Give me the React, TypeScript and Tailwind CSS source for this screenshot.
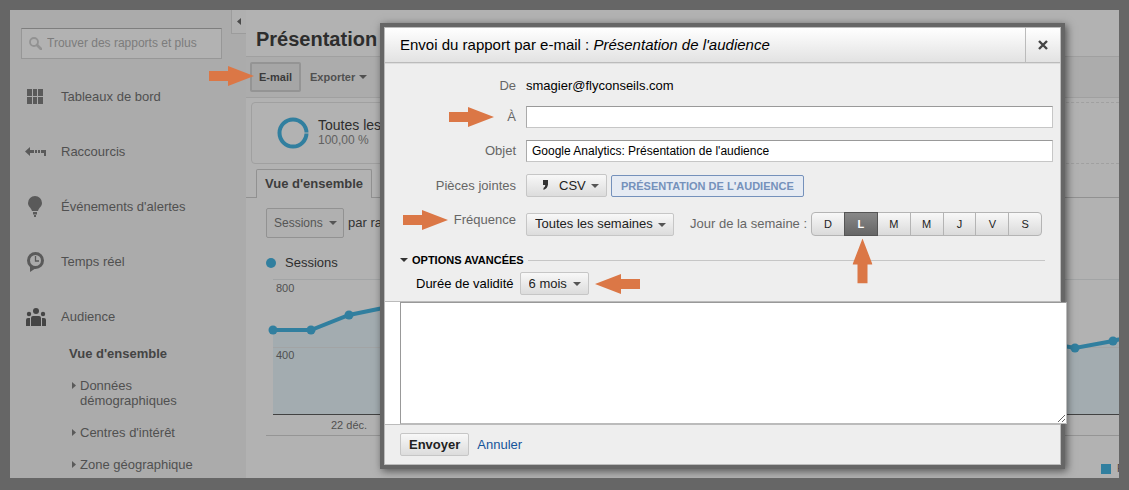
import type { ReactNode } from "react";
import clsx from "clsx";

const DAYS = ["D", "L", "M", "M", "J", "V", "S"];

const STEP = 38.17;
const SESSIONS = [
  51, 51, 36, 28, 24, 30, 44, 52, 50, 38, 30, 26, 34, 48, 54, 50, 40, 32, 30, 46, 62, 69, 62, 52,
];

function Caret({ className }: { className?: string }) {
  return (
    <svg className={clsx("h-1 w-2", className)} viewBox="0 0 8 4" aria-hidden>
      <path d="M0 0h8L4 4z" fill="currentColor" />
    </svg>
  );
}

function Arrow({ className }: { className?: string }) {
  return (
    <svg className={clsx("h-5 w-[45px] shrink-0 text-[#db7746]", className)} viewBox="0 0 45 20" aria-hidden>
      <path d="M0 5h19V0l26 10-26 10v-5H0z" fill="currentColor" />
    </svg>
  );
}

function Dropdown({ label, value, icon }: { label: string; value: string; icon?: ReactNode }) {
  return (
    <div className="relative">
      <select
        aria-label={label}
        className={clsx(
          "block h-[23px] appearance-none rounded-xs border border-[#c6c6c6] bg-linear-to-b from-[#f8f8f8] to-[#dcdcdc] pr-5 text-[13px] text-[#222]",
          icon ? "pl-8" : "pl-2",
        )}
      >
        <option>{value}</option>
      </select>
      {icon}
      <Caret className="pointer-events-none absolute right-2 top-[10px] text-[#555]" />
    </div>
  );
}

function NavItem({ icon, label }: { icon: ReactNode; label: string }) {
  return (
    <a href="#" className="flex h-[55px] items-center pl-1">
      <span className="w-9">{icon}</span>
      {label}
    </a>
  );
}

function SubItem({ children }: { children: ReactNode }) {
  return (
    <a href="#" className="flex gap-1">
      <svg className="mt-1 h-[7px] w-1 shrink-0" viewBox="0 0 4 7" aria-hidden>
        <path d="M0 0v7l4-3.500z" fill="#5a5a5a" />
      </svg>
      <span>{children}</span>
    </a>
  );
}

function Sidebar() {
  return (
    <aside className="relative w-[236px] shrink-0 bg-[#ababab] pl-[11px] pr-6 pt-[18px] text-[13px] leading-[15px] text-[#505050]">
      <button
        type="button"
        aria-label="Réduire le menu"
        className="absolute right-0 top-0 flex h-6 w-[15px] items-center justify-center border-b border-l border-[#9c9c9c] bg-[#b0b0b0]"
      >
        <svg className="h-[7px] w-1" viewBox="0 0 4 7" aria-hidden>
          <path d="M4 0v7L0 3.500z" fill="#4a4a4a" />
        </svg>
      </button>

      <label className="flex h-[31px] items-center gap-[5px] border border-[#979797] border-t-[#7e7e7e] bg-[#b2b2b2] pl-[7px]">
        <svg className="h-[13px] w-[13px] shrink-0" viewBox="0 0 13 13" fill="none" stroke="#929292" aria-hidden>
          <circle cx="5" cy="5" r="4" strokeWidth="1.800" />
          <path d="M8 8l4 4" strokeWidth="2.600" strokeLinecap="round" />
        </svg>
        <input
          type="text"
          aria-label="Rechercher"
          placeholder="Trouver des rapports et plus"
          className="w-full min-w-0 bg-transparent text-[12px] outline-none placeholder:text-[#7c7c7c]"
        />
      </label>

      <nav className="mt-[10px]">
        <NavItem
          label="Tableaux de bord"
          icon={
            <svg className="ml-[2px] h-[15px] w-4" viewBox="0 0 16 15" fill="#5a5a5a" aria-hidden>
              <path d="M0 0h5v7H0zM6 0h4v7H6zM11 0h5v7h-5zM0 8h5v7H0zM6 8h4v7H6zM11 8h5v7h-5z" />
            </svg>
          }
        />
        <NavItem
          label="Raccourcis"
          icon={
            <svg className="h-[9px] w-[21px]" viewBox="0 0 21 9" fill="#5a5a5a" aria-hidden>
              <path d="M0 4.500L5 0v3h4v3H5v3zM10 3h2v3h-2zM13 3h2v3h-2zM16 3h5v6h-2V6h-3z" />
            </svg>
          }
        />
        <NavItem
          label="Événements d'alertes"
          icon={
            <svg className="ml-[3px] h-[21px] w-[14px]" viewBox="0 0 14 21" fill="#5a5a5a" aria-hidden>
              <path d="M7 0a7 7 0 0 1 7 7c0 3.500-3 4.500-4 8H4c-1-3.500-4-4.500-4-8a7 7 0 0 1 7-7zM5 16h4v1.500H5zM5 17.500h4v1H5zM6 19h2v2H6z" />
            </svg>
          }
        />
        <NavItem
          label="Temps réel"
          icon={
            <svg className="ml-[2px] h-5 w-[17px]" viewBox="0 0 17 20" fill="none" stroke="#5a5a5a" aria-hidden>
              <circle cx="8.500" cy="8.500" r="7" strokeWidth="3" />
              <path d="M8.500 4v5H12" strokeWidth="1.300" />
              <path d="M3 13v7l6-4z" fill="#5a5a5a" stroke="none" />
            </svg>
          }
        />
        <NavItem
          label="Audience"
          icon={
            <svg className="ml-px h-[18px] w-5" viewBox="0 0 20 18" fill="#454545" aria-hidden>
              <circle cx="10" cy="3" r="3" />
              <circle cx="3" cy="6" r="2.200" />
              <circle cx="17" cy="6" r="2.200" />
              <path d="M5 18v-8q0-2 2-2h6q2 0 2 2v8zM0 18v-6q0-2 2-2h2v8zM20 18v-6q0-2-2-2h-2v8z" />
            </svg>
          }
        />
        <div className="mt-[2px] flex flex-col gap-[17px] pl-[51px]">
          <a href="#" className="-ml-[3px] font-bold text-[#444]">
            Vue d'ensemble
          </a>
          <SubItem>
            Données
            <br />
            démographiques
          </SubItem>
          <SubItem>Centres d'intérêt</SubItem>
          <SubItem>Zone géographique</SubItem>
        </div>
      </nav>
    </aside>
  );
}

function Chart() {
  const points = SESSIONS.map((y, i) => ({ x: 7 + Math.round(i * STEP), y }));
  const line = points.map((p) => `${p.x},${p.y}`).join(" ");
  const last = points[points.length - 1];

  return (
    <svg className="h-[137px] w-full" role="img" aria-label="Sessions">
      <polygon points={`7,136 ${line} ${last.x},136`} fill="#a3acb0" />
      <path d="M7 .500h2000M7 68.500h2000" stroke="#a2a4a5" />
      <path d="M7 135.500h2000" stroke="#424242" />
      <polyline points={line} fill="none" stroke="#317f9f" strokeWidth="4" />
      {points.map((p) => (
        <circle key={p.x} cx={p.x} cy={p.y} r="4.500" fill="#317f9f" />
      ))}
      <g fontSize="11" fill="#505050">
        <text x="10" y="13">800</text>
        <text x="10" y="80">400</text>
      </g>
    </svg>
  );
}

function Report() {
  return (
    <main className="flex min-w-0 flex-1 flex-col text-[#444]">
      <h1 className="flex h-[46px] items-center whitespace-nowrap pl-[10px] pt-3 text-[20px] font-bold text-[#2d2d2d]">
        Présentation
      </h1>

      <div className="flex h-[42px] items-center gap-[9px] border-y border-[#a0a0a0] bg-[#acacac] pl-1 text-[11px] font-bold">
        <div className="relative">
          <button
            type="button"
            className="h-[30px] w-[51px] rounded-xs border-2 border-[#949494] bg-[#a6a6a6] text-[#3a3a3a]"
          >
            E-mail
          </button>
          <Arrow className="absolute -left-[41px] top-1" />
        </div>
        <button type="button" className="flex items-center gap-1 text-[#505050]">
          Exporter
          <Caret />
        </button>
      </div>

      <div className="mt-1 flex gap-3 pl-[5px]">
        <section className="flex h-[62px] w-[260px] items-center gap-[9px] rounded-sm border border-[#a0a0a0] pl-[25px]">
          <svg className="h-8 w-8" viewBox="0 0 32 32" aria-hidden>
            <circle cx="16" cy="16" r="13.500" fill="none" stroke="#317f9f" strokeWidth="4" />
            <path d="M27 16h5" stroke="#b2b2b2" />
          </svg>
          <p className="text-[12px] leading-[15px] text-[#606060]">
            <span className="block text-[14px] text-[#2d2d2d]">Toutes les sessions</span>
            100,00 %
          </p>
        </section>
        <div className="flex-1 border-y border-dashed border-[#a0a0a0]" />
      </div>

      <div className="mt-[5px] flex items-end border-b border-[#919191] pl-[10px]">
        <button
          type="button"
          className="-mb-px h-[29px] rounded-t-xs border border-b-0 border-[#919191] bg-[#b2b2b2] px-2 text-[13px] font-bold text-[#3d3d3d]"
        >
          Vue d'ensemble
        </button>
      </div>

      <div className="mt-[10px] flex items-center gap-1 pl-5">
        <div className="relative">
          <select
            aria-label="Statistique"
            className="block h-[30px] appearance-none rounded-xs border border-[#929292] bg-[#b0b0b0] pl-[7px] pr-5 text-[12px] text-[#555]"
          >
            <option>Sessions</option>
          </select>
          <Caret className="pointer-events-none absolute right-[7px] top-[13px] text-[#555]" />
        </div>
        <span className="whitespace-nowrap text-[13px] text-[#333]">par rapport à</span>
      </div>

      <div className="mt-4 flex items-center gap-[9px] pl-5 text-[13px] leading-[17px] text-[#2d2d2d]">
        <span className="h-[10px] w-[10px] rounded-full bg-[#317f9f]" />
        Sessions
      </div>
      <div className="mt-2 pl-5">
        <Chart />
        <div className="h-[20px] border-b border-[#959595] pl-[65px] text-[11px] leading-[18px] text-[#505050]">
          22 déc.
        </div>
      </div>

      <div className="-mr-[100px] mt-[25px] flex items-center justify-end gap-[6px] text-[11px] leading-[15px]">
        <span className="h-[10px] w-[10px] shrink-0 bg-[#317f9f]" />
        <span className="w-[102px] whitespace-nowrap">Returning Visitor</span>
      </div>
    </main>
  );
}

function MailDialog() {
  return (
    <div
      role="dialog"
      aria-labelledby="mail-title"
      className="absolute left-[370px] right-[54px] top-[13px] border-4 border-[#666] bg-[#eee] text-[13px] shadow-[2px_2px_8px_rgba(0,0,0,0.55)]"
    >
      <form className="border border-[#bbb]">
        <header className="flex h-[35px] border-b border-[#bbb] bg-linear-to-b from-white to-[#e2e2e2] shadow-[0_1px_0_#ddd]">
          <h2 id="mail-title" className="flex-1 self-center pl-[15px] text-[15px] text-black">
            Envoi du rapport par e-mail : <em>Présentation de l'audience</em>
          </h2>
          <button
            type="button"
            aria-label="Fermer"
            className="flex w-[35px] items-center justify-center border-l border-[#bbb] text-[#444]"
          >
            <svg className="h-[10px] w-[10px]" viewBox="0 0 10 10" aria-hidden>
              <path d="M1 1l8 8M9 1L1 9" stroke="currentColor" strokeWidth="2.400" />
            </svg>
          </button>
        </header>

        <div className="grid grid-cols-[131px_1fr] items-center gap-x-[10px] gap-y-3 pr-[7px] pt-[15px] leading-[16px] text-[#666]">
          <span className="text-right">De</span>
          <span className="text-black">smagier@flyconseils.com</span>

          <label htmlFor="to" className="flex items-center justify-end gap-[13px]">
            <Arrow />À
          </label>
          <input
            id="to"
            type="text"
            className="h-[22px] border border-[#c6c6c6] border-t-[#999] border-l-[#aaa] bg-white px-[5px] text-[12px] text-black"
          />

          <label htmlFor="subject" className="text-right">
            Objet
          </label>
          <input
            id="subject"
            type="text"
            defaultValue="Google Analytics: Présentation de l'audience"
            className="h-[22px] border border-[#c6c6c6] border-t-[#999] border-l-[#aaa] bg-white px-[5px] text-[12px] text-black"
          />

          <span className="text-right">Pièces jointes</span>
          <div className="flex items-center gap-1">
            <Dropdown
              label="Pièces jointes"
              value="CSV"
              icon={
                <svg className="pointer-events-none absolute left-4 top-[6px] h-[10px] w-[6px]" viewBox="0 0 6 10" aria-hidden>
                  <path d="M1 0h5v4.500Q5.500 8.500 1.500 10V8Q3.300 7 3.300 5H1z" fill="#333" />
                </svg>
              }
            />
            <span className="h-[22px] rounded-xs border border-[#7591bb] bg-[#e6ebf3] px-[9px] text-[11px] font-bold leading-5 text-[#7591bb]">
              PRÉSENTATION DE L'AUDIENCE
            </span>
          </div>

          <span className="mt-[3px] flex items-center justify-end gap-[6px] self-start">
            <Arrow className="-my-1" />
            Fréquence
          </span>
          <div className="mt-[3px] flex items-center">
            <Dropdown label="Fréquence" value="Toutes les semaines" />
            <span className="ml-4">Jour de la semaine :</span>
            <div className="ml-1 flex h-6 w-[231px] rounded-sm border border-[#b4b4b4] bg-linear-to-b from-[#f8f8f8] to-[#dadada]">
              {DAYS.map((day, i) => (
                <button
                  key={i}
                  type="button"
                  aria-pressed={i === 1}
                  className={clsx(
                    "relative flex-1 text-[11px]",
                    i === 1
                      ? "-my-px border border-[#555] bg-linear-to-b from-[#888] to-[#666] font-bold text-white"
                      : "text-[#222]",
                    i > 1 && i < 6 && "border-r border-[#b4b4b4]",
                  )}
                >
                  {day}
                  {i === 1 && <Arrow className="absolute -left-[5px] top-[38px] -rotate-90" />}
                </button>
              ))}
            </div>
          </div>
        </div>

        <div className="px-[15px] pt-4">
          <div className="flex items-center gap-1 text-[11px] font-bold leading-[16px] text-black">
            <button type="button" className="flex items-center gap-1">
              <Caret className="text-[#333]" />
              OPTIONS AVANCÉES
            </button>
            <span className="h-px flex-1 bg-[#c6c6c6]" />
          </div>
          <div className="mt-1 flex items-center gap-[6px] pl-4 text-black">
            Durée de validité
            <Dropdown label="Durée de validité" value="6 mois" />
            <Arrow className="rotate-180" />
          </div>
        </div>

        <div className="mt-[6px] border-y border-[#bbb] bg-white pl-[15px]">
          <textarea
            aria-label="Message"
            className="relative block h-[122px] w-[calc(100%+7px)] border border-[#bbb] border-t-[#999] border-l-[#999] bg-white p-1 text-black"
          />
        </div>

        <footer className="flex items-center gap-2 px-[15px] py-2">
          <button
            type="submit"
            className="h-[23px] rounded-xs border border-[#c6c6c6] bg-linear-to-b from-[#f8f8f8] to-[#dcdcdc] px-2 font-bold text-[#222]"
          >
            Envoyer
          </button>
          <a href="#" className="text-[#15549a]">
            Annuler
          </a>
        </footer>
      </form>
    </div>
  );
}

export default function App() {
  return (
    <div className="flex min-h-screen bg-[#666] px-[10px] pb-3 pt-[10px] font-['Liberation_Sans',Arial,sans-serif]">
      <div className="relative flex min-w-0 flex-1 overflow-hidden bg-[#b2b2b2]">
        <Sidebar />
        <Report />
        <MailDialog />
      </div>
    </div>
  );
}
